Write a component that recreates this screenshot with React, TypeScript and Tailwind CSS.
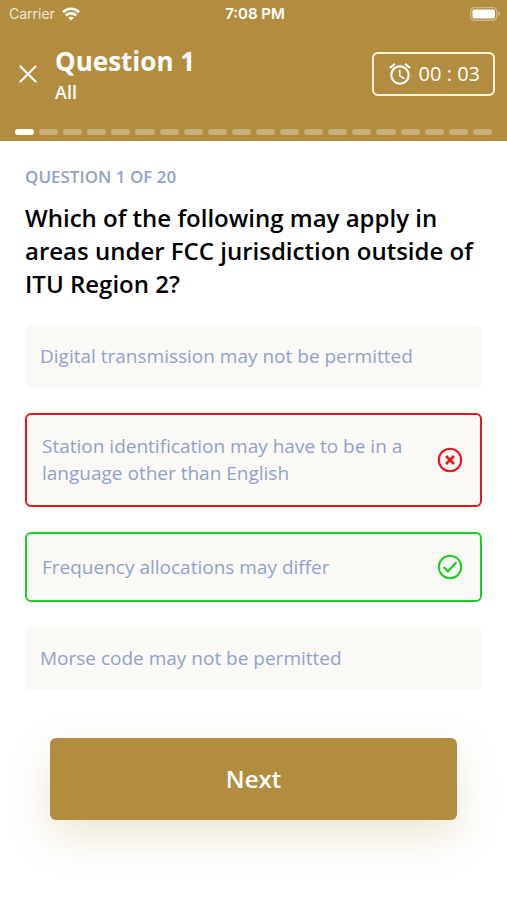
import { useState } from 'react';
import { MdAccessAlarm } from 'react-icons/md';
import { clsx } from 'clsx';

const TOTAL = 20;

const options = [
  { text: 'Digital transmission may not be permitted' },
  { text: 'Station identification may have to be in a language other than English', result: 'wrong' },
  { text: 'Frequency allocations may differ', result: 'correct' },
  { text: 'Morse code may not be permitted' },
];

const StatusBar = () => (
  <div className="grid grid-cols-3 items-center h-7 pl-[9px] pr-[6px] font-[Inter,sans-serif] text-sm">
    <div className="flex items-center gap-[7px]">
      <span className="opacity-80">Carrier</span>
      <svg className="w-[18px] h-[14px]" viewBox="0 0 18 14" fill="none" stroke="currentColor" strokeWidth="2.7">
        <path d="M.9 5.2C5.5 .6 12.5 .6 17.1 5.2" />
        <path d="M3.8 8.5c2.9-2.8 7.5-2.8 10.4 0" />
        <path d="M9 13.6 6.1 10.7c1.7-1.4 4.1-1.4 5.8 0Z" fill="currentColor" stroke="none" />
      </svg>
    </div>
    <span className="text-center text-[15px] font-semibold">7:08 PM</span>
    <svg className="justify-self-end w-[31px] h-[14px]" viewBox="0 0 31 14">
      <rect x=".7" y=".7" width="26" height="12.6" rx="3.6" fill="none" stroke="#fff" strokeOpacity=".4" strokeWidth="1.2" />
      <rect x="2.4" y="2.4" width="22.6" height="9.2" rx="2" fill="#fff" />
      <path d="M28.4 4.8c1.8.6 1.8 3.8 0 4.4Z" fill="#fff" fillOpacity=".5" />
    </svg>
  </div>
);

const ResultIcon = ({ result }: { result: string }) => (
  <svg
    className={clsx('w-[30px] h-[30px] shrink-0', result === 'wrong' ? 'text-[#ea151b]' : 'text-[#1fce22]')}
    viewBox="0 0 30 30"
    fill="none"
    stroke="currentColor"
    strokeLinejoin="round"
  >
    <circle cx="15" cy="15" r="11.2" strokeWidth="2.1" />
    {result === 'wrong' ? (
      <path d="M11 11l8 8M19 11l-8 8" strokeWidth="2.6" />
    ) : (
      <path d="M9.2 15.6l3.6 3.8 8-8.6" strokeWidth="2.2" strokeLinecap="round" />
    )}
  </svg>
);

const Progress = ({ current }: { current: number }) => (
  <div className="flex gap-[5px] px-[15px]">
    {Array.from({ length: TOTAL }, (_, i) => (
      <span key={i} className={clsx('h-[6px] flex-1 rounded-full', i < current ? 'bg-white' : 'bg-white/30')} />
    ))}
  </div>
);

export default function App() {
  const [question] = useState(1);

  return (
    <div className="min-h-screen bg-white font-['Open_Sans',sans-serif]">
      <header className="bg-[#b38d3f] text-white pb-[6px]">
        <StatusBar />
        <div className="flex items-center pl-[18px] pr-3 pt-[15px] pb-6">
          <button type="button" aria-label="Close">
            <svg className="w-5 h-5" viewBox="0 0 20 20" fill="none" stroke="currentColor" strokeWidth="2.2" strokeLinecap="round">
              <path d="M2.5 2.5l15 15M17.5 2.5l-15 15" />
            </svg>
          </button>
          <div className="flex-1 ml-[17px]">
            <h1 className="text-[26px] leading-[36px] font-bold">Question {question}</h1>
            <p className="text-lg leading-[26px] font-semibold">All</p>
          </div>
          <div className="flex items-center gap-[6px] h-11 px-[13px] border-2 border-[#fff6e2] rounded-md">
            <MdAccessAlarm className="w-[26px] h-[26px]" />
            <span className="text-xl whitespace-nowrap">00 : 03</span>
          </div>
        </div>
        <Progress current={question} />
      </header>

      <main className="px-[25px] pt-6 pb-20">
        <p className="text-[17px] leading-6 font-semibold text-[#93a1c8]">QUESTION {question} OF {TOTAL}</p>
        <h2 className="mt-3 text-2xl leading-[33px] font-semibold text-black">
          Which of the following may apply in areas under FCC jurisdiction outside of ITU Region 2?
        </h2>

        <div className="flex flex-col gap-[25px] mt-[25px]">
          {options.map(({ text, result }) => (
            <button
              key={text}
              type="button"
              className={clsx(
                'flex items-center justify-between gap-5 px-[15px] py-[18px] rounded-md bg-[#faf9f5] text-left text-[19px] leading-[27px] text-[#93a1c8]',
                result === 'wrong' && 'border-2 border-[#ea151b]',
                result === 'correct' && 'border-2 border-[#1fce22]',
              )}
            >
              <span>{text}</span>
              {result && <ResultIcon result={result} />}
            </button>
          ))}
        </div>

        <div className="px-[25px] mt-12">
          <button
            type="button"
            className="w-full h-[82px] rounded-md bg-[#b38d3f] text-white text-2xl font-semibold shadow-[0_16px_40px_rgba(179,141,63,0.22)]"
          >
            Next
          </button>
        </div>
      </main>
    </div>
  );
}
